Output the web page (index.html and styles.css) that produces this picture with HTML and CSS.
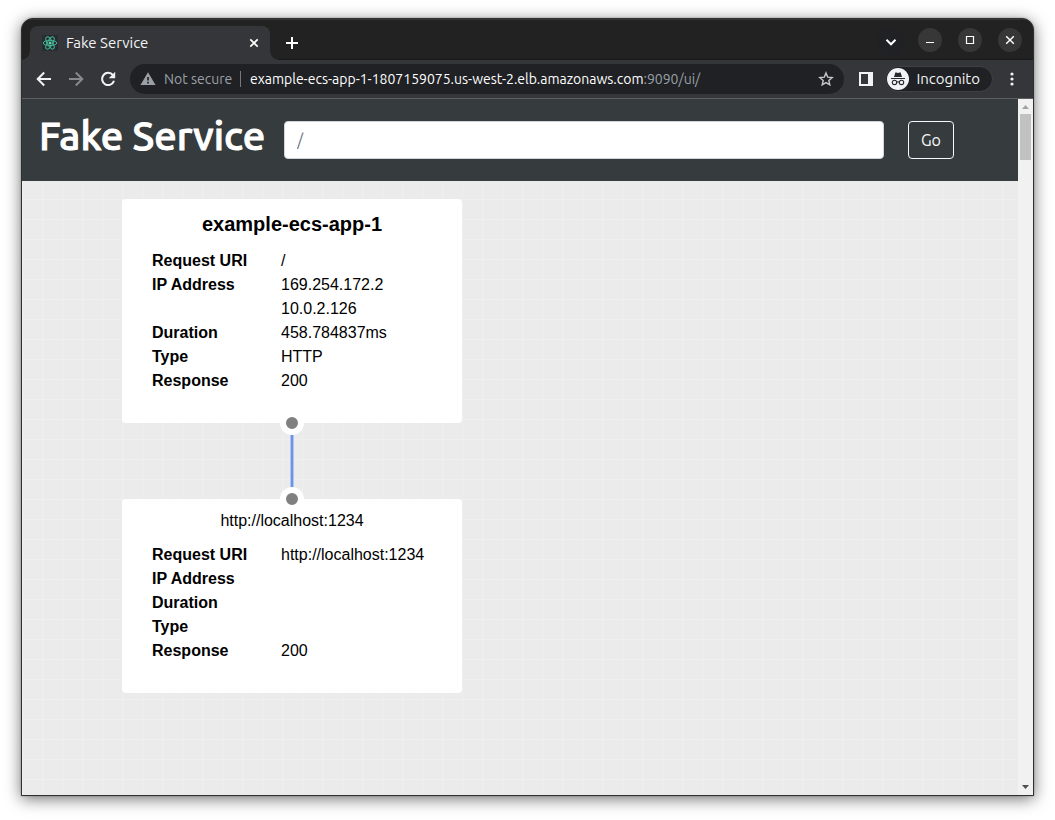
FILE: index.html
```html
<!DOCTYPE html>
<html lang="en">
<head>
<meta charset="utf-8">
<title>Fake Service</title>
<link rel="stylesheet" href="styles.css">
</head>
<body>
<div class="window">
  <div class="tabstrip">
    <div class="tab">
      <svg class="favicon" viewBox="0 0 16 16" aria-hidden="true">
        <rect width="16" height="16" fill="#282c34"/>
        <g fill="none" stroke="#41b892" stroke-width="1">
          <ellipse cx="8" cy="8" rx="6.8" ry="2.6"/>
          <ellipse cx="8" cy="8" rx="6.8" ry="2.6" transform="rotate(60 8 8)"/>
          <ellipse cx="8" cy="8" rx="6.8" ry="2.6" transform="rotate(120 8 8)"/>
        </g>
        <circle cx="8" cy="8" r="1.5" fill="#5fd6ae"/>
      </svg>
      <span class="tab-title">Fake Service</span>
      <button class="icon-btn tab-close" aria-label="Close tab">
        <svg width="16" height="16" viewBox="0 0 16 16"><path d="M4.300 4.300l7.400 7.400M11.700 4.300l-7.400 7.400" stroke="#fff" stroke-width="1.700"/></svg>
      </button>
    </div>
    <button class="icon-btn new-tab" aria-label="New tab">
      <svg width="28" height="28" viewBox="0 0 28 28"><path d="M14 8v12M8 14h12" stroke="#fff" stroke-width="2"/></svg>
    </button>
    <div class="window-controls">
      <button class="icon-btn round dark" aria-label="Search tabs">
        <svg width="24" height="24" viewBox="0 0 24 24"><path d="M7.500 9.800L12 14.300l4.500-4.500" fill="none" stroke="#fff" stroke-width="2"/></svg>
      </button>
      <button class="icon-btn round" aria-label="Minimize">
        <svg width="24" height="24" viewBox="0 0 24 24"><path d="M8 14.500h8" stroke="#fff" stroke-width="1"/></svg>
      </button>
      <button class="icon-btn round" aria-label="Maximize">
        <svg width="24" height="24" viewBox="0 0 24 24"><path d="M8.500 8.500h7v7h-7z" fill="none" stroke="#fff" stroke-width="1.200"/></svg>
      </button>
      <button class="icon-btn round" aria-label="Close">
        <svg width="24" height="24" viewBox="0 0 24 24"><path d="M8.200 8.200l7.600 7.600M15.800 8.200l-7.600 7.600" stroke="#fff" stroke-width="1.400"/></svg>
      </button>
    </div>
  </div>

  <div class="toolbar">
    <div class="nav">
      <button class="icon-btn" aria-label="Back">
        <svg width="20" height="20" viewBox="0 0 20 20"><path d="M17 10H4M10.200 3.500L3.700 10l6.500 6.500" fill="none" stroke="#f1f3f4" stroke-width="2"/></svg>
      </button>
      <button class="icon-btn" aria-label="Forward">
        <svg width="20" height="20" viewBox="0 0 20 20"><path d="M3 10h13M9.800 3.500l6.500 6.500-6.500 6.500" fill="none" stroke="#87898d" stroke-width="2"/></svg>
      </button>
      <button class="icon-btn" aria-label="Reload">
        <svg width="20" height="20" viewBox="0 0 20 20"><path d="M15 6.200A6.100 6.100 0 1 0 16 11.800" fill="none" stroke="#f1f3f4" stroke-width="2"/><path d="M17.200 2.800v6.400h-6.400z" fill="#f1f3f4"/></svg>
      </button>
    </div>
    <div class="omnibox">
      <svg class="warn" width="16" height="16" viewBox="0 0 16 16" aria-hidden="true"><path d="M8 1.200L15.500 14H.5z" fill="#9aa0a6"/><path d="M7.200 6h1.700v3.400H7.200zM7.200 10.700h1.700v1.700H7.200z" fill="#202124"/></svg>
      <span class="security">Not secure</span>
      <span class="url">example-ecs-app-1-1807159075.us-west-2.elb.amazonaws.com<span class="url-rest">:9090/ui/</span></span>
      <button class="icon-btn star" aria-label="Bookmark this tab">
        <svg width="16" height="16" viewBox="0 0 16 16"><path d="M8 1.900l1.700 4.200 4.500.4-3.400 3 1 4.400L8 11.600l-3.800 2.300 1-4.400-3.400-3 4.500-.4z" fill="none" stroke="#c6c8cb" stroke-width="1.400"/></svg>
      </button>
    </div>
    <button class="icon-btn panel" aria-label="Side panel">
      <svg width="14" height="14" viewBox="0 0 14 14"><path d="M0 0h14v14H0zM2 2v10h7V2z" fill="#f1f3f4" fill-rule="evenodd"/></svg>
    </button>
    <button class="incognito">
      <svg width="22" height="22" viewBox="0 0 22 22" aria-hidden="true">
        <circle cx="11" cy="11" r="11" fill="#f1f3f4"/>
        <path d="M7 9l1.200-4.100q.3-.7 1-.5l1.800.5 1.800-.5q.7-.2 1 .5L15 9zM4 9.900h14v1.100H4z" fill="#292a2d"/>
        <g fill="none" stroke="#292a2d" stroke-width="1.100"><circle cx="7.500" cy="14.400" r="2.200"/><circle cx="14.500" cy="14.400" r="2.200"/><path d="M9.700 14.200q1.300-.8 2.600 0"/></g>
      </svg>
      <span>Incognito</span>
    </button>
    <button class="icon-btn menu" aria-label="Menu">
      <svg width="16" height="16" viewBox="0 0 16 16" fill="#f1f3f4"><circle cx="8" cy="3" r="1.600"/><circle cx="8" cy="8" r="1.600"/><circle cx="8" cy="13" r="1.600"/></svg>
    </button>
  </div>

  <div class="viewport">
    <main class="page">
      <header class="page-header">
        <h1>Fake Service</h1>
        <form class="request-form">
          <input class="path" type="text" placeholder="/" aria-label="Request path">
          <button class="go" type="button">Go</button>
        </form>
      </header>
      <section class="canvas">
        <article class="node">
          <h2 class="node-title strong">example-ecs-app-1</h2>
          <table class="facts">
            <tr><th scope="row">Request URI</th><td>/</td></tr>
            <tr><th scope="row">IP Address</th><td>169.254.172.2<br>10.0.2.126</td></tr>
            <tr><th scope="row">Duration</th><td>458.784837ms</td></tr>
            <tr><th scope="row">Type</th><td>HTTP</td></tr>
            <tr><th scope="row">Response</th><td>200</td></tr>
          </table>
          <span class="port port-out"></span>
        </article>
        <div class="link"></div>
        <article class="node">
          <h2 class="node-title">http://localhost:1234</h2>
          <table class="facts">
            <tr><th scope="row">Request URI</th><td>http://localhost:1234</td></tr>
            <tr><th scope="row">IP Address</th><td></td></tr>
            <tr><th scope="row">Duration</th><td></td></tr>
            <tr><th scope="row">Type</th><td></td></tr>
            <tr><th scope="row">Response</th><td>200</td></tr>
          </table>
          <span class="port port-in"></span>
        </article>
      </section>
    </main>
    <div class="scrollbar" aria-hidden="true">
      <svg width="15" height="15" viewBox="0 0 15 15"><path d="M4 10h7L7.500 6z" fill="#a3a3a3"/></svg>
      <div class="thumb"></div>
      <svg class="down" width="15" height="15" viewBox="0 0 15 15"><path d="M4 5h7L7.500 9z" fill="#505050"/></svg>
    </div>
  </div>
</div>
</body>
</html>
```
FILE: styles.css
```css
* {
  box-sizing: border-box;
}

body {
  display: flex;
  min-height: 100vh;
  margin: 0;
  padding: 18px 21px 24px;
  background: #fff;
  font-family: Ubuntu, "Noto Sans", sans-serif;
}

button {
  font: inherit;
}

.window {
  display: flex;
  flex: 1;
  flex-direction: column;
  min-width: 0;
  overflow: hidden;
  border: 1px solid #2d2f30;
  border-radius: 12px 12px 0 0;
  background: #222;
  box-shadow: 0 3px 16px rgba(0, 0, 0, 0.55), 0 0 2px rgba(0, 0, 0, 0.3);
}

.icon-btn {
  display: flex;
  align-items: center;
  justify-content: center;
  padding: 0;
  border: 0;
  background: none;
}

.tabstrip {
  display: flex;
  align-items: flex-end;
  height: 41px;
  padding-left: 8px;
  border-top: 1px solid #353535;
  background: linear-gradient(#222 0 39px, #191919 39px);
}

.tab {
  position: relative;
  display: flex;
  align-items: center;
  width: 240px;
  height: 34px;
  padding: 0 8px 0 12px;
  border-radius: 8px 8px 0 0;
  background: #35363a;
  color: #f1f3f4;
  font-size: 15px;
}

.tab::before,
.tab::after {
  position: absolute;
  bottom: 0;
  width: 8px;
  height: 8px;
  content: "";
}

.tab::before {
  right: 100%;
  background: radial-gradient(circle at 0 0, transparent 7px, #35363a 8px);
}

.tab::after {
  left: 100%;
  background: radial-gradient(circle at 100% 0, transparent 7px, #35363a 8px);
}

.favicon {
  width: 16px;
  height: 16px;
  margin-right: 8px;
}

.tab-title {
  flex: 1;
  line-height: 16px;
}

.new-tab {
  width: 28px;
  height: 34px;
  margin-left: 8px;
}

.window-controls {
  display: flex;
  gap: 16px;
  height: 40px;
  margin-left: auto;
  padding: 8px 11px 0 0;
}

.round {
  width: 24px;
  height: 24px;
  border-radius: 50%;
  background: #373737;
}

.round.dark {
  width: 26px;
  height: 28px;
  margin-right: -2px;
  background: #202124;
}

.toolbar {
  display: flex;
  align-items: center;
  height: 39px;
  padding: 0 13px 0 12px;
  border-bottom: 1px solid #5c5e61;
  background: #35363a;
  color: #f1f3f4;
  font-size: 15px;
}

.nav {
  display: flex;
  gap: 12px;
  margin-right: 12px;
}

.omnibox {
  display: flex;
  flex: 1;
  align-items: center;
  min-width: 0;
  height: 30px;
  padding: 0 10px;
  border-radius: 15px;
  background: #202124;
  font-size: 14px;
}

.warn {
  margin-right: 8px;
}

.security {
  width: 77px;
  border-right: 1px solid #76787b;
  color: #9aa0a6;
  line-height: 16px;
  white-space: nowrap;
}

.url {
  flex: 1;
  margin-left: 9px;
  overflow: hidden;
  color: #fff;
  white-space: nowrap;
}

.url-rest {
  color: #9aa0a6;
}

.panel {
  margin: 0 12px 0 15px;
}

.incognito {
  display: flex;
  gap: 7px;
  align-items: center;
  height: 26px;
  padding: 0 12px 0 1px;
  border: 1px solid #3f4043;
  border-radius: 13px;
  background: #202124;
  color: #f1f3f4;
  line-height: 16px;
}

.menu {
  margin-left: 11px;
}

.viewport {
  display: flex;
  flex: 1;
}

.page {
  display: flex;
  flex: 1;
  flex-direction: column;
  min-width: 0;
}

.page-header {
  display: flex;
  gap: 19px;
  align-items: center;
  height: 82px;
  padding: 0 64px 0 17px;
  background: #363b3e;
  color: #fff;
}

h1 {
  margin: 0 0 8px;
  font-size: 40px;
  font-weight: 500;
  line-height: 48px;
  white-space: nowrap;
  -webkit-text-stroke: 1px #fff;
}

.request-form {
  display: flex;
  flex: 1;
  gap: 24px;
}

.path {
  flex: 1;
  min-width: 0;
  height: 38px;
  padding: 6px 12px;
  border: 1px solid #ced4da;
  border-radius: 4px;
  background: #fff;
  color: #495057;
  font: inherit;
}

.path::placeholder {
  color: #6c757d;
}

.go {
  width: 46px;
  height: 38px;
  padding: 0;
  border: 1px solid #f8f9fa;
  border-radius: 4px;
  background: none;
  color: #f8f9fa;
}

.canvas {
  flex: 1;
  padding: 18px 0 18px 100px;
  background-color: #ebebeb;
  background-image:
    linear-gradient(90deg, #efefef 1px, transparent 1px),
    linear-gradient(#efefef 1px, transparent 1px);
  background-position: 0 18px;
  background-size: 20px 20px;
  color: #000;
  font-family: "Liberation Sans", Arial, sans-serif;
  font-size: 16px;
  line-height: 24px;
}

.node {
  position: relative;
  width: 340px;
  padding: 10px 30px 30px;
  border-radius: 4px;
  background: #fff;
}

.node-title {
  margin: 0 0 10px;
  font-size: 16px;
  font-weight: 400;
  text-align: center;
}

.node-title.strong {
  font-size: 20px;
  font-weight: 700;
  line-height: 30px;
}

.facts {
  border-spacing: 0;
}

.facts th,
.facts td {
  height: 24px;
  padding: 0;
  text-align: left;
  vertical-align: top;
}

.facts th {
  width: 129px;
}

.port {
  position: absolute;
  left: 50%;
  width: 24px;
  height: 24px;
  margin-left: -12px;
  border: 6px solid #fff;
  border-radius: 50%;
  background: #808080;
}

.port-out {
  bottom: -12px;
}

.port-in {
  top: -12px;
}

.link {
  width: 4px;
  height: 76px;
  margin-left: 168px;
  border: solid #b3c5ed;
  border-width: 0 1px;
  background: #6c93ec;
}

.scrollbar {
  display: flex;
  flex-direction: column;
  align-items: center;
  width: 15px;
  background: #f1f1f1;
}

.thumb {
  width: 11px;
  height: 46px;
  background: #c1c1c1;
}

.down {
  margin-top: auto;
}
```
